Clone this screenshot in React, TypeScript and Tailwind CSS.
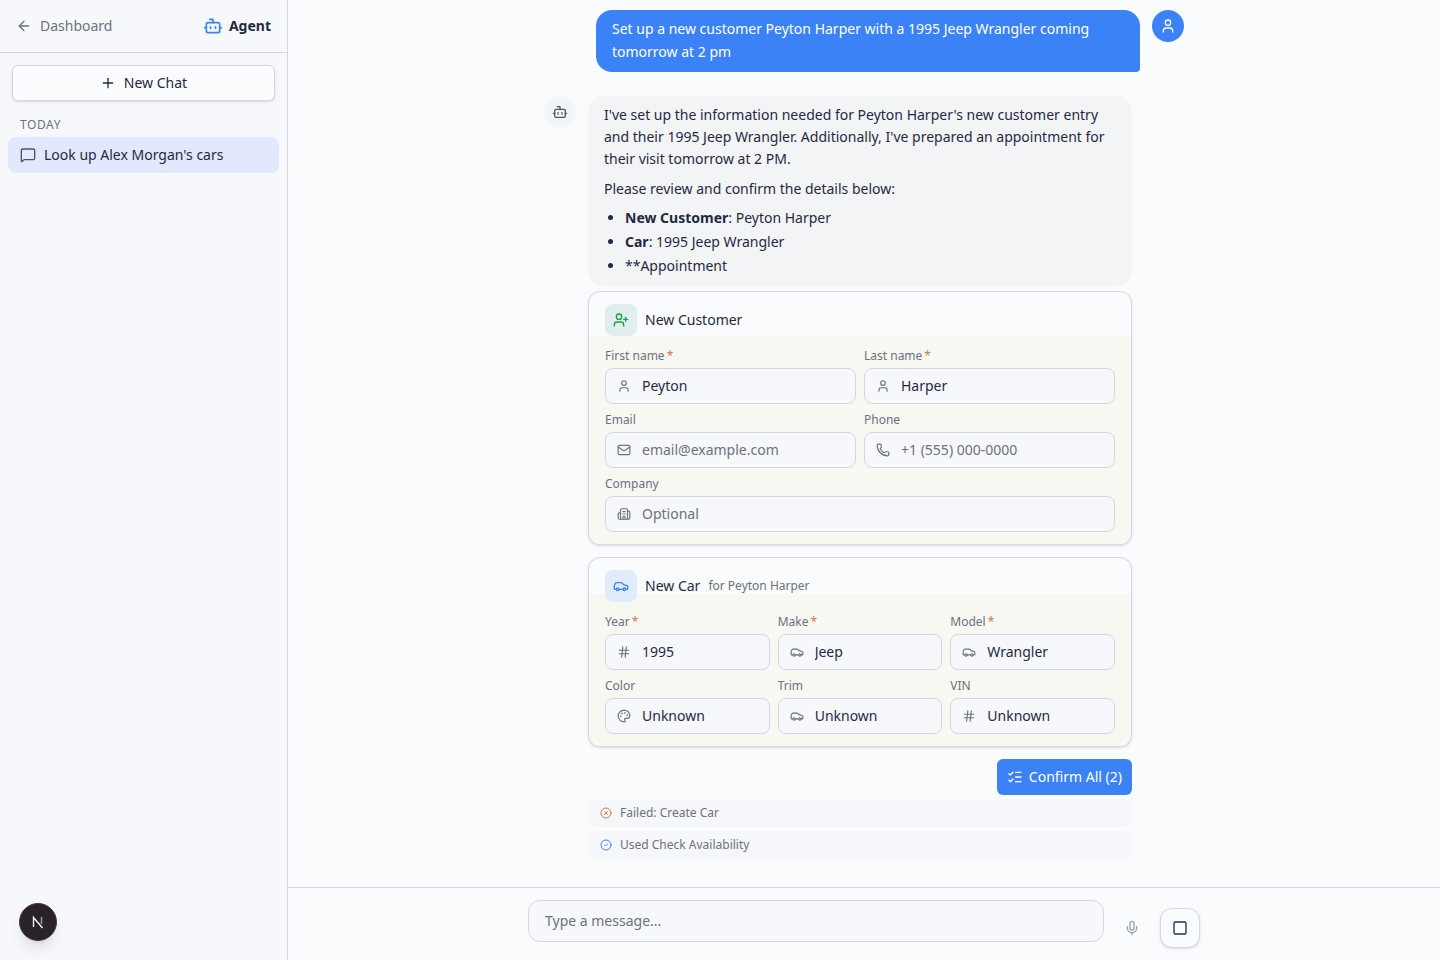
import {
  ArrowLeft,
  Bot,
  Building2,
  Car,
  CircleCheck,
  CircleX,
  Hash,
  ListChecks,
  Mail,
  MessageSquare,
  Mic,
  Palette,
  Phone,
  Plus,
  Square,
  User,
  UserPlus,
  type LucideIcon,
} from "lucide-react";

type FieldProps = {
  label: string;
  icon: LucideIcon;
  value?: string;
  placeholder?: string;
  required?: boolean;
  className?: string;
};

const Field = ({ label, icon: Icon, value, placeholder, required, className }: FieldProps) => (
  <div className={className}>
    <label className="mb-1 block h-4 text-xs leading-4 text-[#6b7280]">
      {label}
      {required && <span className="ml-0.5 text-[#d0794a]">*</span>}
    </label>
    <div className="flex h-9 items-center gap-[11px] rounded-lg border border-[#d4d7e3] bg-[#f7f8fb] px-[11px]">
      <Icon size={14} className="shrink-0 text-[#6b7280]" />
      <input
        readOnly
        value={value ?? ""}
        placeholder={placeholder}
        className="w-full min-w-0 bg-transparent text-sm text-[#1f2a44] outline-none placeholder:text-[#6b7280]"
      />
    </div>
  </div>
);

const Sidebar = () => (
  <aside className="flex h-full w-[288px] shrink-0 flex-col border-r border-[#d4d7e3] bg-[#f7f8fb]">
    <div className="flex h-[53px] shrink-0 items-center justify-between border-b border-[#d4d7e3] pl-4 pr-4">
      <div className="flex items-center gap-2 text-sm text-[#6b7280]">
        <ArrowLeft size={16} />
        <span>Dashboard</span>
      </div>
      <div className="flex items-center gap-1.5">
        <Bot size={20} className="text-[#3b82f6]" />
        <span className="text-sm font-bold text-[#1f2a44]">Agent</span>
      </div>
    </div>
    <div className="px-3 pt-3">
      <button className="flex h-9 w-full items-center justify-center gap-2 rounded-md border border-[#d4d7e3] bg-[#fbfcfd] text-sm text-[#1f2a44] shadow-sm">
        <Plus size={16} />
        New Chat
      </button>
    </div>
    <div className="px-2 pt-4">
      <div className="px-3 pb-1 text-xs uppercase leading-4 tracking-wider text-[#6b7280]">Today</div>
      <div className="flex h-9 items-center gap-2 rounded-lg bg-[#e2e8fd] px-3 text-sm text-[#1f2a44]">
        <MessageSquare size={16} className="text-[#4b5563]" />
        <span>Look up Alex Morgan's cars</span>
      </div>
    </div>
    <div className="mt-auto pb-[19px] pl-[19px]">
      <div className="flex size-[38px] items-center justify-center rounded-full border border-[#4d3350] bg-[#292227] shadow-lg">
        <svg width="14" height="14" viewBox="0 0 14 14" fill="none">
          <path d="M2.5 12V2.5L11.5 13" stroke="#f3f4f6" strokeWidth="1.4" />
          <path d="M10.5 2v7" stroke="#9ca3af" strokeWidth="1.4" />
        </svg>
      </div>
    </div>
  </aside>
);

const Messages = () => (
  <div className="min-h-0 flex-1 overflow-hidden pt-2.5">
    <div className="mx-auto flex w-[640px] flex-col gap-6">
      {/* User message */}
      <div className="flex justify-end gap-3">
        <div className="w-[544px] rounded-2xl rounded-br-sm bg-[#3b82f6] px-4 pb-[9px] pt-[7px] text-sm leading-[23px] text-white">
          Set up a new customer Peyton Harper with a 1995 Jeep Wrangler coming tomorrow at 2 pm
        </div>
        <div className="flex size-8 shrink-0 items-center justify-center rounded-full bg-[#3b82f6] text-white">
          <User size={16} />
        </div>
      </div>

      {/* Agent message */}
      <div className="flex gap-3">
        <div className="flex size-8 shrink-0 items-center justify-center rounded-full bg-[#f3f4f6] text-[#4b5563]">
          <Bot size={16} />
        </div>
        <div className="w-[544px]">
          <div className="rounded-2xl bg-[#f3f4f6] px-4 pb-[9px] pt-2 text-sm leading-[22px] text-[#1f2a44]">
            <p className="mb-2">
              I've set up the information needed for Peyton Harper's new customer entry and their 1995 Jeep Wrangler.
              Additionally, I've prepared an appointment for their visit tomorrow at 2 PM.
            </p>
            <p className="mb-[7px]">Please review and confirm the details below:</p>
            <ul className="list-disc space-y-0.5 pl-[21px]">
              <li>
                <strong>New Customer</strong>: Peyton Harper
              </li>
              <li>
                <strong>Car</strong>: 1995 Jeep Wrangler
              </li>
              <li>**Appointment</li>
            </ul>
          </div>

          {/* New customer card */}
          <div className="mt-[5px] overflow-hidden rounded-xl border border-[#d4d7e3] bg-[#fafbfd] shadow-sm">
            <div className="flex items-center gap-2 px-4 pt-3">
              <div className="flex size-8 items-center justify-center rounded-lg bg-[#e1eeee] text-[#16a34a]">
                <UserPlus size={16} />
              </div>
              <span className="text-sm text-[#1f2a44]">New Customer</span>
            </div>
            <div className="grid grid-cols-2 gap-2 bg-[#f7f8f2] px-4 py-3">
              <Field label="First name" icon={User} value="Peyton" required />
              <Field label="Last name" icon={User} value="Harper" required />
              <Field label="Email" icon={Mail} placeholder="email@example.com" />
              <Field label="Phone" icon={Phone} placeholder="+1 (555) 000-0000" />
              <Field label="Company" icon={Building2} placeholder="Optional" className="col-span-2" />
            </div>
          </div>

          {/* New car card */}
          <div className="mt-3 overflow-hidden rounded-xl border border-[#d4d7e3] bg-[#fafbfd] shadow-sm">
            <div className="relative z-10 flex h-9 items-start gap-2 px-4 pt-3">
              <div className="flex size-8 shrink-0 items-center justify-center rounded-lg bg-[#e0ebfc] text-[#3b82f6]">
                <Car size={16} />
              </div>
              <div className="flex h-8 items-center gap-2">
                <span className="text-sm text-[#1f2a44]">New Car</span>
                <span className="text-xs text-[#6b7280]">for Peyton Harper</span>
              </div>
            </div>
            <div className="grid grid-cols-3 gap-2 bg-[#f7f8f2] px-4 pb-3 pt-5">
              <Field label="Year" icon={Hash} value="1995" required />
              <Field label="Make" icon={Car} value="Jeep" required />
              <Field label="Model" icon={Car} value="Wrangler" required />
              <Field label="Color" icon={Palette} value="Unknown" />
              <Field label="Trim" icon={Car} value="Unknown" />
              <Field label="VIN" icon={Hash} value="Unknown" />
            </div>
          </div>

          <div className="mt-3 flex justify-end">
            <button className="flex h-9 items-center gap-1.5 rounded-md bg-[#3b82f6] px-2.5 text-sm text-white">
              <ListChecks size={16} />
              Confirm All (2)
            </button>
          </div>

          <div className="mt-1 flex flex-col gap-1">
            <div className="flex h-7 items-center gap-2 rounded-lg bg-[#f6f7fa] px-3 text-xs text-[#6b7280]">
              <CircleX size={12} className="text-[#d0794a]" />
              Failed: Create Car
            </div>
            <div className="flex h-7 items-center gap-2 rounded-lg bg-[#f6f7fa] px-3 text-xs text-[#6b7280]">
              <CircleCheck size={12} className="text-[#3b82f6]" />
              Used Check Availability
            </div>
          </div>
        </div>
      </div>
    </div>
  </div>
);

const Composer = () => (
  <div className="shrink-0 border-t border-[#d4d7e3] py-3">
    <div className="mx-auto flex w-[672px] items-end gap-2">
      <input
        placeholder="Type a message..."
        className="mb-1.5 h-[42px] min-w-0 flex-1 rounded-xl border border-[#d4d7e3] bg-[#f7f8fb] px-4 pb-0.5 text-sm outline-none placeholder:text-[#6b7280]"
      />
      <button className="flex size-10 items-center justify-center text-[#9ca3af]">
        <Mic size={16} />
      </button>
      <button className="flex size-10 items-center justify-center rounded-xl border border-[#d4d7e3] bg-[#fafbfd] text-[#1e3163] shadow-sm">
        <Square size={16} />
      </button>
    </div>
  </div>
);

export default function App() {
  return (
    <div className="flex h-screen w-full overflow-hidden bg-[#fafbfd] font-['Noto_Sans',sans-serif]">
      <Sidebar />
      <main className="flex min-w-0 flex-1 flex-col">
        <Messages />
        <Composer />
      </main>
    </div>
  );
}
